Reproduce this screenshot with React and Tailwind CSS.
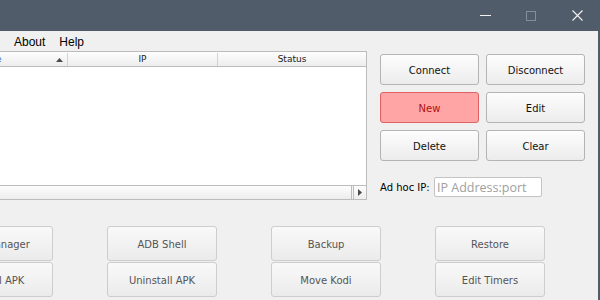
import React from 'react';

const dv = { fontFamily: '"DejaVu Sans", Verdana, sans-serif' };

function TopButton({ label, red }) {
  return (
    <button
      className={
        red
          ? 'h-[31px] w-[99px] pt-[1px] rounded-[3px] border border-[#e06262] bg-[#ffa5a5] text-[10px] text-[#b01010]'
          : 'h-[31px] w-[99px] pt-[1px] rounded-[3px] border border-[#b4b4b4] bg-linear-to-b from-[#fdfdfd] to-[#ececec] text-[10px] text-[#111]'
      }
      style={dv}
    >
      {label}
    </button>
  );
}

function ToolButton({ label }) {
  return (
    <button
      className="h-[35px] w-[110px] pt-[2px] rounded-[3px] border border-[#cdcdcd] bg-linear-to-b from-[#f9f9f9] to-[#ebebeb] text-[10px] text-[#555]"
      style={dv}
    >
      {label}
    </button>
  );
}

export default function App() {
  const tools = [
    'File Manager', 'ADB Shell', 'Backup', 'Restore',
    'Install APK', 'Uninstall APK', 'Move Kodi', 'Edit Timers',
  ];

  return (
    <div className="w-[600px] h-[300px] overflow-hidden bg-[#f0f0f0]" style={dv}>
      {/* title bar */}
      <div className="h-[31px] bg-[#505c6a] flex justify-end">
        <div className="w-[46px] flex items-center justify-center">
          <svg width="11" height="10" viewBox="0 0 11 10">
            <line x1="0" y1="4.5" x2="11" y2="4.5" stroke="#f2f2f2" strokeWidth="1" />
          </svg>
        </div>
        <div className="w-[46px] flex items-center justify-center">
          <svg width="10" height="10" viewBox="0 0 10 10">
            <rect x="0.5" y="0.5" width="9" height="9" fill="none" stroke="#858d97" strokeWidth="1" />
          </svg>
        </div>
        <div className="w-[46px] flex items-center justify-center">
          <svg width="11" height="11" viewBox="0 0 11 11">
            <path d="M0.5 0.5 L10.5 10.5 M10.5 0.5 L0.5 10.5" stroke="#f2f2f2" strokeWidth="1.1" />
          </svg>
        </div>
      </div>

      <div className="border-r-2 border-[#505c6a] h-[269px]">
        {/* menu bar */}
        <div
          className="h-[19px] flex items-center pt-[2px] pl-[7px] text-[12px] text-black"
          style={{ fontFamily: '"Liberation Sans", Arial, sans-serif' }}
        >
          <span className="px-[7px]">About</span>
          <span className="px-[7px]">Help</span>
        </div>

        {/* table + side panel */}
        <div className="flex mt-[1px]">
          <div className="ml-[-83px] w-[450px] border border-[#bcbcbc] bg-white">
            <div className="flex h-[15px] pt-[1px] border-b border-[#bcbcbc] bg-linear-to-b from-[#fdfdfd] to-[#ededed] text-[9px]">
              <div className="w-[150px] border-r border-[#d2d2d2] flex items-center justify-end pr-[4px] relative">
                <span className="absolute left-[57px] text-[#1f6fc8]">Name</span>
                <svg width="7" height="4" viewBox="0 0 7 4">
                  <path d="M0 4 L3.5 0 L7 4 Z" fill="#4a4a4a" />
                </svg>
              </div>
              <div className="w-[150px] border-r border-[#d2d2d2] flex items-center justify-center text-[#222]">IP</div>
              <div className="flex-1 flex items-center justify-center text-[#222]">Status</div>
            </div>
            <div className="h-[118px] bg-white" />
            <div className="flex h-[14px] border-t border-[#bcbcbc]">
              <div className="flex-1 bg-linear-to-b from-[#fdfdfd] to-[#ededed]" />
              <div className="w-[3px] border-x border-[#bcbcbc] bg-[#f3f3f3]" />
              <div className="w-[12px] flex items-center justify-center bg-linear-to-b from-[#fdfdfd] to-[#ededed]">
                <svg width="4" height="7" viewBox="0 0 4 7">
                  <path d="M0 0 L4 3.5 L0 7 Z" fill="#4a4a4a" />
                </svg>
              </div>
            </div>
          </div>

          <div className="ml-[13px] pt-[3px]">
            <div className="grid grid-cols-[99px_99px] gap-x-[7px] gap-y-[7px]">
              <TopButton label="Connect" />
              <TopButton label="Disconnect" />
              <TopButton label="New" red />
              <TopButton label="Edit" />
              <TopButton label="Delete" />
              <TopButton label="Clear" />
            </div>
            <div className="flex items-center mt-[16px]">
              <span className="text-[10px] text-black w-[54px]">Ad hoc IP:</span>
              <input
                className="w-[108px] h-[20px] rounded-[2px] border border-[#c4c4c4] bg-white px-[2px] text-[12.5px] outline-none placeholder:text-[#a0a0a0]"
                style={{ fontFamily: '"Open Sans", "DejaVu Sans", sans-serif' }}
                placeholder="IP Address:port"
              />
            </div>
          </div>
        </div>

        {/* tool buttons */}
        <div className="ml-[-57px] mt-[26px] grid grid-cols-[110px_110px_110px_110px] gap-x-[54px] gap-y-[1px]">
          {tools.map((t) => (
            <ToolButton key={t} label={t} />
          ))}
        </div>
      </div>
    </div>
  );
}
